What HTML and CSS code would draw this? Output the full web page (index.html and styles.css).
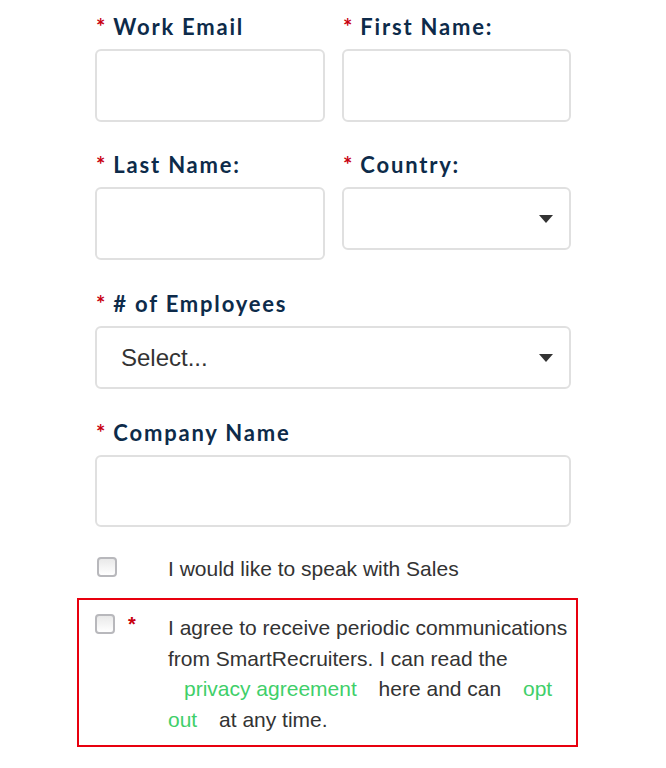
FILE: index.html
```html
<!DOCTYPE html>
<html lang="en">
<head>
<meta charset="utf-8">
<title>Form</title>
<link rel="stylesheet" href="styles.css">
</head>
<body>
<form class="form">
  <div class="grid2">
    <div class="field">
      <label class="label"><span class="req">*</span>Work Email</label>
      <div class="input"></div>
    </div>
    <div class="field">
      <label class="label"><span class="req">*</span>First Name:</label>
      <div class="input"></div>
    </div>
    <div class="field">
      <label class="label"><span class="req">*</span>Last Name:</label>
      <div class="input"></div>
    </div>
    <div class="field">
      <label class="label"><span class="req">*</span>Country:</label>
      <div class="select">
        <span class="select-text"></span>
        <svg class="caret" width="14" height="8" viewBox="0 0 14 8"><path d="M0 0H14L7 8Z" fill="#333"/></svg>
      </div>
    </div>
  </div>
  <div class="field">
    <label class="label"><span class="req">*</span># of Employees</label>
    <div class="select">
      <span class="select-text">Select...</span>
      <svg class="caret" width="14" height="8" viewBox="0 0 14 8"><path d="M0 0H14L7 8Z" fill="#333"/></svg>
    </div>
  </div>
  <div class="field field-last">
    <label class="label"><span class="req">*</span>Company Name</label>
    <div class="input input-short"></div>
  </div>
  <div class="check-row">
    <span class="checkbox"></span>
    <span class="check-text">I would like to speak with Sales</span>
  </div>
  <div class="consent">
    <span class="checkbox consent-box"></span>
    <span class="consent-req">*</span>
    <p class="consent-text">I agree to receive periodic communications from SmartRecruiters. I can read the <a class="link" href="#">privacy agreement</a> here and can <a class="link" href="#">opt out</a> at any time.</p>
  </div>
</form>
</body>
</html>
```
FILE: styles.css
```css
body {
  margin: 0;
  background: #ffffff;
  font-family: "Liberation Sans", Arial, sans-serif;
}

.form {
  width: 476px;
  margin-left: 95px;
  padding-top: 14px;
}

.grid2 {
  display: grid;
  grid-template-columns: 230px 229px;
  column-gap: 17px;
  row-gap: 30px;
  margin-bottom: 31px;
}

.field {
  display: flex;
  flex-direction: column;
  align-items: stretch;
  margin-bottom: 31px;
}

.grid2 .field {
  margin-bottom: 0;
}

.field-last {
  margin-bottom: 30px;
}

.label {
  display: block;
  height: 26px;
  overflow: visible;
  white-space: nowrap;
  font-family: "Lato", "Open Sans", sans-serif;
  font-weight: 700;
  font-size: 22px;
  line-height: 26px;
  letter-spacing: 1.8px;
  color: #0d2b4a;
  margin-bottom: 9px;
}

.req {
  color: #c8000f;
  font-size: 22px;
  line-height: 0;
  letter-spacing: 0;
  margin-right: 8px;
  margin-left: 1px;
}

.input {
  height: 73px;
  box-sizing: border-box;
  border: 2px solid #e0e0e0;
  border-radius: 6px;
  background: #fff;
}

.input-short {
  height: 72px;
}

.select {
  height: 63px;
  box-sizing: border-box;
  border: 2px solid #e0e0e0;
  border-radius: 6px;
  background: #fff;
  display: flex;
  align-items: center;
  justify-content: space-between;
  padding: 0 16px 0 24px;
}

.select-text {
  font-size: 24px;
  color: #333;
}

.caret {
  display: block;
}

.check-row {
  display: flex;
  align-items: flex-start;
  height: 24px;
  margin-bottom: 17px;
}

.checkbox {
  display: block;
  width: 20px;
  height: 20px;
  box-sizing: border-box;
  border: 2px solid #b8b8bc;
  border-radius: 4px;
  background: linear-gradient(#e9e9e9, #ffffff);
  flex: none;
}

.check-row .checkbox {
  margin-left: 2px;
}

.check-text {
  margin-left: 51px;
  font-size: 21px;
  line-height: 24px;
  color: #333;
}

.consent {
  display: flex;
  align-items: flex-start;
  width: 501px;
  box-sizing: border-box;
  margin-left: -18px;
  border: 2px solid #e8000e;
  padding: 13px 8px 10px 16px;
}

.consent-box {
  margin-top: 1px;
}

.consent-req {
  margin-left: 13px;
  margin-top: -1px;
  color: #c8000f;
  font-size: 20px;
  font-weight: 700;
  line-height: 24px;
  width: 40px;
  flex: none;
}

.consent-text {
  margin: 0;
  font-size: 21px;
  line-height: 30.5px;
  color: #333;
  flex: 1;
}

.link {
  color: #3fcf6a;
  text-decoration: none;
  padding: 0 16px;
}
```
